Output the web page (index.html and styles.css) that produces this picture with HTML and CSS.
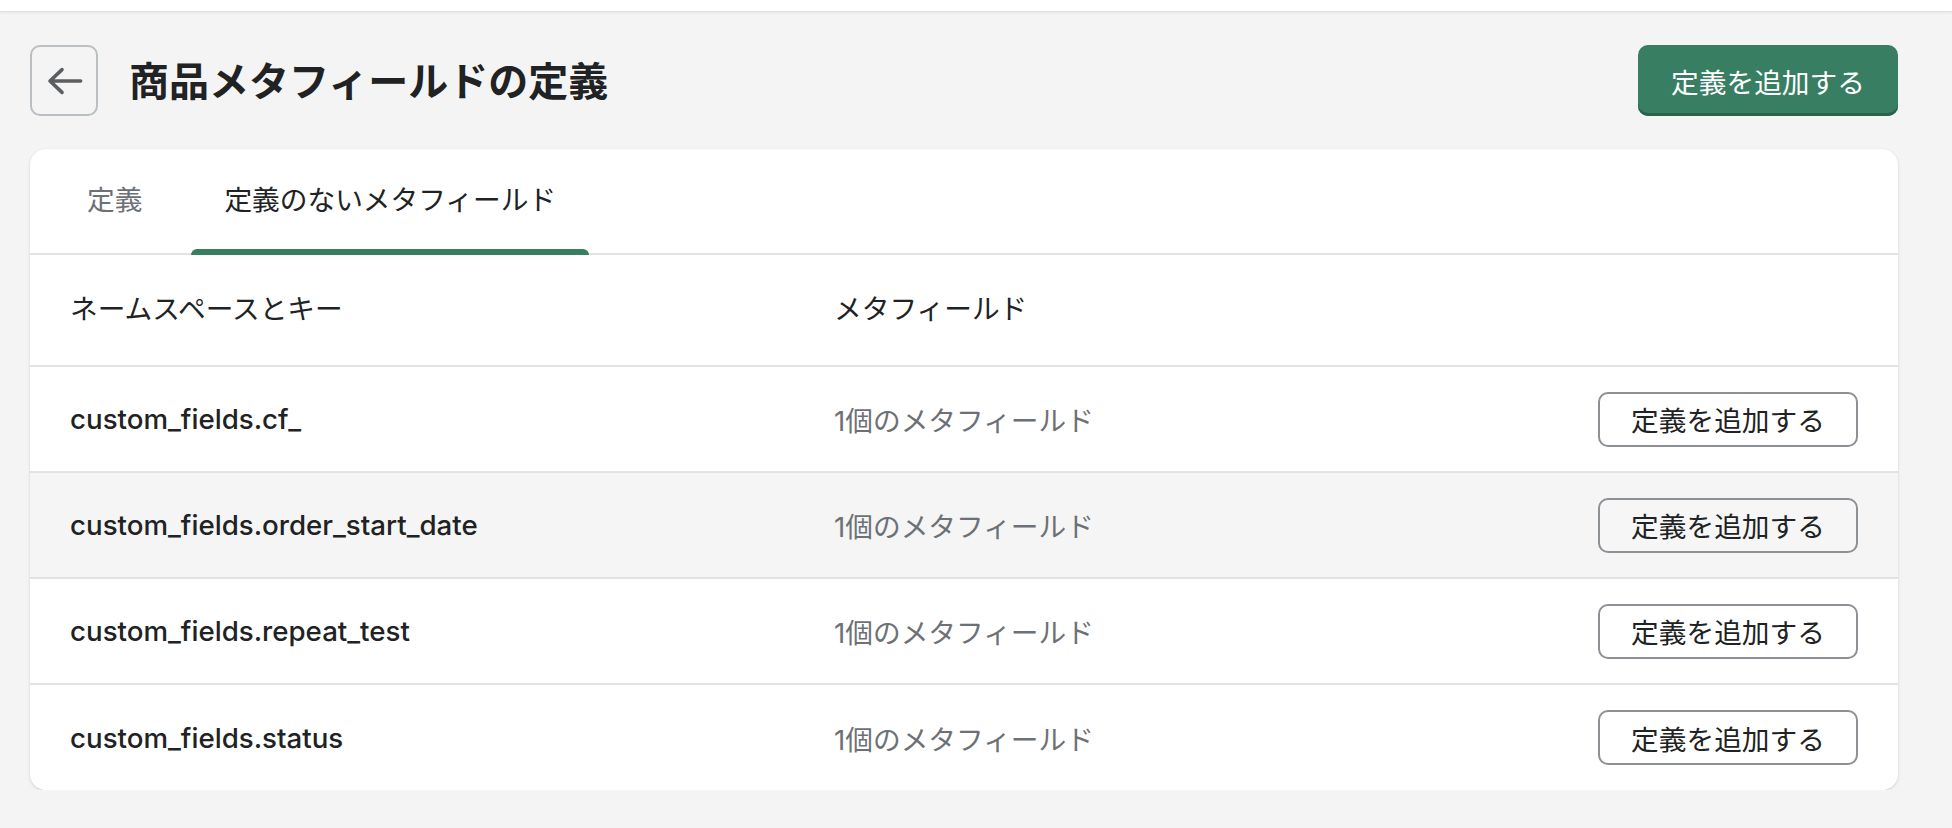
FILE: index.html
```html
<!DOCTYPE html>
<html lang="ja">
<head>
    <meta charset="UTF-8">
    <meta name="viewport" content="width=device-width, initial-scale=1.0">
    <title>商品メタフィールドの定義</title>
    <link rel="stylesheet" href="styles.css">
</head>
<body>
    <div class="topbar"></div>
    <div class="page">
        <div class="page-header">
            <div class="title-wrap">
                <button class="back-btn" aria-label="戻る">
                    <svg width="40" height="40" viewBox="0 0 20 20">
                        <path d="M18.3 10H3M9 4.3L3 10 9 15.7" fill="none" stroke="#5c5f62" stroke-width="1.8" stroke-linecap="round" stroke-linejoin="round"/>
                    </svg>
                </button>
                <h1>商品メタフィールドの定義</h1>
            </div>
            <button class="primary-btn">定義を追加する</button>
        </div>

        <div class="card">
            <div class="tabs">
                <div class="tab">定義</div>
                <div class="tab active">定義のないメタフィールド</div>
            </div>
            <div class="table">
                <div class="row head">
                    <div>ネームスペースとキー</div>
                    <div>メタフィールド</div>
                    <div></div>
                </div>
                <div class="row">
                    <div class="key">custom_fields.cf_</div>
                    <div class="count">1個のメタフィールド</div>
                    <div><button class="outline-btn">定義を追加する</button></div>
                </div>
                <div class="row hover">
                    <div class="key">custom_fields.order_start_date</div>
                    <div class="count">1個のメタフィールド</div>
                    <div><button class="outline-btn">定義を追加する</button></div>
                </div>
                <div class="row">
                    <div class="key">custom_fields.repeat_test</div>
                    <div class="count">1個のメタフィールド</div>
                    <div><button class="outline-btn">定義を追加する</button></div>
                </div>
                <div class="row">
                    <div class="key">custom_fields.status</div>
                    <div class="count">1個のメタフィールド</div>
                    <div><button class="outline-btn">定義を追加する</button></div>
                </div>
            </div>
        </div>
    </div>
</body>
</html>
```

FILE: styles.css
```css
body {
    margin: 0;
    background: #f4f4f4;
    font-family: Inter, "Noto Sans CJK JP", sans-serif;
    color: #202223;
}
.topbar {
    height: 11px;
    background: #fff;
    border-bottom: 1px solid #e1e1e1;
    box-shadow: 0 1px 3px rgba(0, 0, 0, 0.06);
}
.page {
    padding: 33px 54px 0 30px;
}
.page-header {
    display: flex;
    justify-content: space-between;
    align-items: center;
    height: 71px;
}
.title-wrap {
    display: flex;
    align-items: center;
    gap: 31px;
}
.back-btn {
    width: 68px;
    height: 71px;
    border: 2px solid #babfc3;
    border-radius: 10px;
    background: transparent;
    display: flex;
    align-items: center;
    justify-content: center;
    padding: 0;
}
h1 {
    margin: 0 0 4px;
    font-size: 40px;
    font-weight: 700;
    font-family: "Noto Sans CJK JP", sans-serif;
    color: #202223;
}
.primary-btn {
    width: 260px;
    height: 71px;
    border: none;
    border-radius: 10px;
    background: #387e62;
    box-shadow: inset 0 -3px 0 #2b624c;
    color: #fff;
    font-family: "Noto Sans CJK JP", sans-serif;
    font-size: 27.7px;
    padding: 0;
}
.card {
    margin-top: 33px;
    background: #fff;
    border-radius: 16px;
    box-shadow: 0 1px 3px rgba(0, 0, 0, 0.15);
    overflow: hidden;
}
.tabs {
    display: flex;
    gap: 16px;
    padding-left: 24px;
    height: 104px;
    border-bottom: 2px solid #e3e3e3;
}
.tab {
    display: flex;
    align-items: center;
    padding: 0 33px 6px;
    font-size: 27.7px;
    color: #6d7175;
    font-family: "Noto Sans CJK JP", sans-serif;
    position: relative;
}
.tab.active {
    color: #202223;
}
.tab.active::after {
    content: "";
    position: absolute;
    left: 0;
    right: 0;
    bottom: -2px;
    height: 6px;
    background: #387e62;
    border-radius: 6px 6px 0 0;
}
.row {
    display: grid;
    grid-template-columns: 764px 1fr auto;
    align-items: center;
    height: 104px;
    padding: 0 40px;
    border-bottom: 2px solid #e3e3e3;
    font-size: 27.7px;
}
.row.head {
    height: 110px;
    padding-bottom: 6px;
    box-sizing: border-box;
    height: 112px;
    font-family: "Noto Sans CJK JP", sans-serif;
}
.row:last-child {
    border-bottom: none;
    height: 105px;
}
.row.hover {
    background: #f5f5f5;
}
.key {
    font-weight: 500;
    color: #202223;
}
.count {
    color: #6d7175;
}
.outline-btn {
    width: 260px;
    height: 55px;
    border: 2px solid #8c9196;
    border-radius: 10px;
    background: #fff;
    color: #202223;
    font-family: "Noto Sans CJK JP", sans-serif;
    font-size: 27.7px;
    padding: 0;
}
.row.hover .outline-btn {
    background: #f6f6f7;
}
```
